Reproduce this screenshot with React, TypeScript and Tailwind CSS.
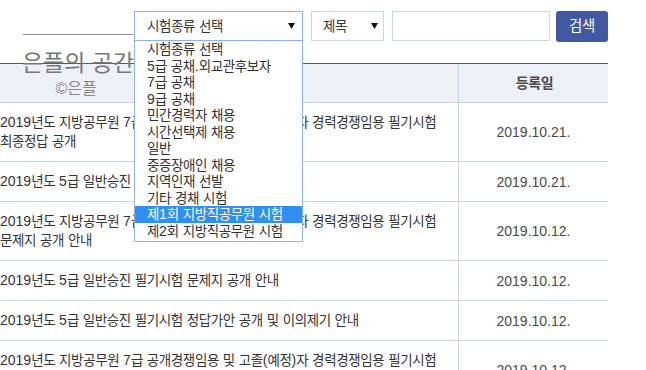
import React from "react";

const HANGUL = /([\uAC00-\uD7A3\u3131-\u318E]+)/;

function K({ t, cls = "text-[13.5px] tracking-[-0.4px]" }: { t: string; cls?: string }) {
  const parts = t.split(HANGUL);
  return (
    <>
      {parts.map((s, i) =>
        i % 2 === 1 ? (
          <span key={i} className={cls}>
            {s}
          </span>
        ) : (
          <React.Fragment key={i}>{s}</React.Fragment>
        )
      )}
    </>
  );
}

const FONT = "[font-family:'Liberation_Sans','Noto_Sans_CJK_KR',sans-serif]";

const options = [
  "시험종류 선택",
  "5급 공채.외교관후보자",
  "7급 공채",
  "9급 공채",
  "민간경력자 채용",
  "시간선택제 채용",
  "일반",
  "중증장애인 채용",
  "지역인재 선발",
  "기타 경채 시험",
  "제1회 지방직공무원 시험",
  "제2회 지방직공무원 시험",
];

const rows: { lines: string[]; date: string }[] = [
  {
    lines: [
      "2019년도 지방공무원 7급 공개경쟁임용 및 고졸(예정)자 경력경쟁임용 필기시험",
      "최종정답 공개",
    ],
    date: "2019.10.21.",
  },
  { lines: ["2019년도 5급 일반승진 필기시험 최종정답 공개"], date: "2019.10.21." },
  {
    lines: [
      "2019년도 지방공무원 7급 공개경쟁임용 및 고졸(예정)자 경력경쟁임용 필기시험",
      "문제지 공개 안내",
    ],
    date: "2019.10.12.",
  },
  { lines: ["2019년도 5급 일반승진 필기시험 문제지 공개 안내"], date: "2019.10.12." },
  {
    lines: ["2019년도 5급 일반승진 필기시험 정답가안 공개 및 이의제기 안내"],
    date: "2019.10.12.",
  },
  {
    lines: [
      "2019년도 지방공무원 7급 공개경쟁임용 및 고졸(예정)자 경력경쟁임용 필기시험",
      "정답가안 공개 및 이의제기 안내",
    ],
    date: "2019.10.12.",
  },
];

function Arrow() {
  return (
    <svg width="7" height="6" viewBox="0 0 7 6" className="shrink-0">
      <polygon points="0,0 7,0 3.5,6" fill="#111" />
    </svg>
  );
}

export default function App() {
  return (
    <div className={`relative w-[646px] h-[370px] overflow-hidden bg-white text-[14px] text-[#333] ${FONT}`}>
      {/* search bar */}
      <div className="flex items-start pt-[11px] pl-[134px] h-[42px]">
        <div className="w-[169px] h-[30px] border border-[#8fb3e8] flex items-center justify-between pl-[12px] pr-[7px] bg-white">
          <span className="leading-[18px] whitespace-nowrap">
            <K t="시험종류 선택" />
          </span>
          <Arrow />
        </div>
        <div className="ml-[8px] w-[73px] h-[30px] border border-[#c9d7e6] flex items-center justify-between pl-[11px] pr-[5px]">
          <span className="leading-[18px]">
            <K t="제목" />
          </span>
          <Arrow />
        </div>
        <div className="ml-[8px] w-[158px] h-[30px] border border-[#c9d7e6]" />
        <button className="ml-[6px] w-[52px] h-[31px] rounded-[3px] bg-[#4358a2] text-white flex items-center justify-center">
          <K t="검색" cls="text-[14.5px] tracking-[-0.4px]" />
        </button>
      </div>

      {/* table */}
      <div className="mt-[21px] w-[608px] border-t border-[#3d5a9b]">
        <div className="grid grid-cols-[459px_149px] bg-[#edf1f7] border-b border-[#c8d5e3] h-[39px]">
          <div className="border-r border-[#c8d5e3] flex items-center justify-center font-bold text-[#555]">
            <K t="제목" />
          </div>
          <div className="flex items-center justify-center font-bold text-[#4a4a4a] pl-[2px]">
            <K t="등록일" cls="text-[14px] tracking-[-0.4px]" />
          </div>
        </div>
        {rows.map((r, i) => (
          <div key={i} className="grid grid-cols-[459px_149px] border-b border-[#c8d5e3]">
            <div className="border-r border-[#c8d5e3] py-[10px] leading-[18px] whitespace-nowrap overflow-hidden">
              {r.lines.map((l, j) => (
                <div key={j}>
                  <K t={l} />
                </div>
              ))}
            </div>
            <div className="flex items-center justify-center text-[#4a4a4a] leading-[18px]">
              {r.date}
            </div>
          </div>
        ))}
      </div>

      {/* heading overlay */}
      <div className="absolute left-[23px] top-[34px] w-[110px] border-t border-[#8a8a8a] flex flex-col items-center">
        <div className="mt-[15px] text-[23px] leading-[27px] text-[#777] whitespace-nowrap">
          은플의 공간
        </div>
        <div className="mt-[2px] text-[16px] leading-[20px] text-[#888] whitespace-nowrap ml-[-4px]">
          ©은플
        </div>
      </div>

      {/* dropdown */}
      <div className="absolute left-[134px] top-[40px] w-[169px] h-[202px] border border-[#8fb3e8] bg-white">
        {options.map((o, i) => (
          <div
            key={i}
            className={`h-[16.5px] leading-[16.5px] pl-[12px] whitespace-nowrap ${
              i === 10 ? "bg-[#2f8ff5] text-white" : "text-[#333]"
            }`}
          >
            <K t={o} />
          </div>
        ))}
      </div>
    </div>
  );
}
